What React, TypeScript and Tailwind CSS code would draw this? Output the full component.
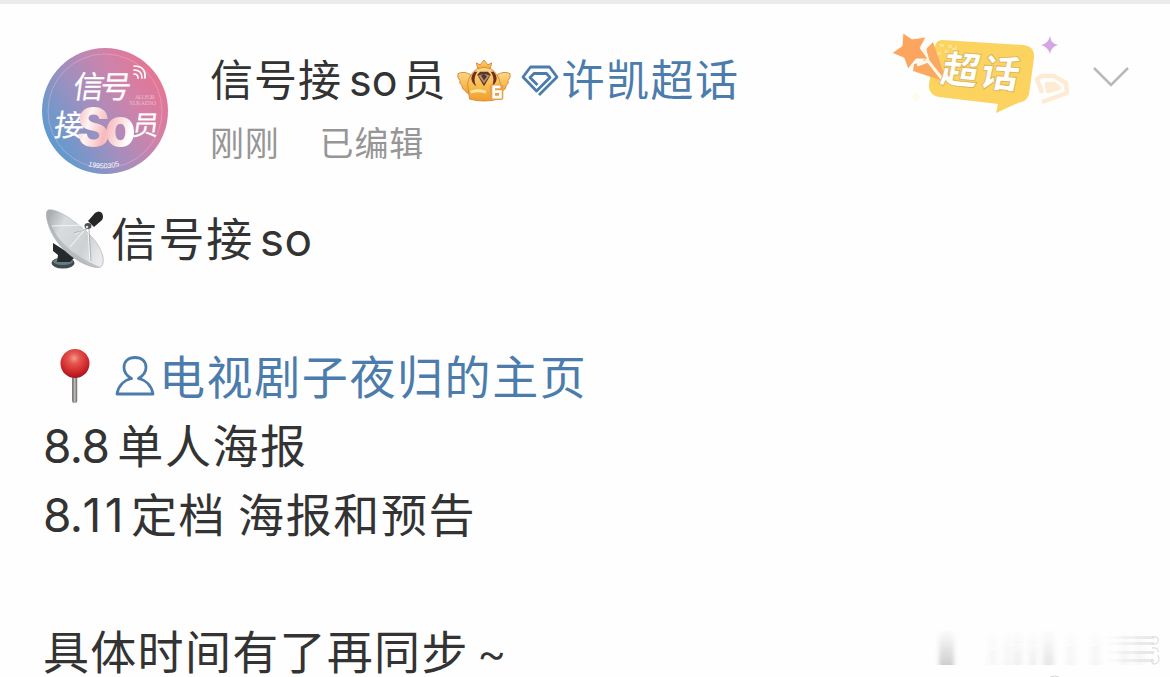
import type { ReactNode } from "react";

const Avatar = () => (
  <svg className="w-[126px] h-[126px] shrink-0" viewBox="0 0 126 126">
    <defs>
      <linearGradient id="disc" x1="0.05" y1="0.75" x2="0.9" y2="0.25">
        <stop offset="0" stopColor="#5b9bd0" />
        <stop offset="0.4" stopColor="#9f90bf" />
        <stop offset="0.75" stopColor="#d082a9" />
        <stop offset="1" stopColor="#e27796" />
      </linearGradient>
      <linearGradient id="so" x1="0" y1="0" x2="1" y2="0.3">
        <stop offset="0" stopColor="#f4a9ad" />
        <stop offset="0.3" stopColor="#fff5f3" />
        <stop offset="0.6" stopColor="#f7b9bb" />
        <stop offset="1" stopColor="#fff" />
      </linearGradient>
    </defs>
    <circle cx="63" cy="63" r="63" fill="url(#disc)" />
    <circle cx="63" cy="63" r="57" fill="none" stroke="#e9b7d0" strokeOpacity="0.6" strokeWidth="0.8" />
    <g fill="#fff" fontFamily="'Noto Sans CJK SC', sans-serif">
      <text x="0" y="0" fontSize="31" textLength="58" stroke="#fff" strokeWidth="0.2" transform="translate(30 50) skewX(-8)">信号</text>
      <text x="0" y="0" fontSize="30" stroke="#fff" strokeWidth="0.2" transform="translate(11 88) skewX(-8)">接</text>
      <text x="0" y="0" fontSize="27" stroke="#fff" strokeWidth="0.2" transform="translate(89 87) skewX(-8)">员</text>
    </g>
    <text x="35" y="98" fontSize="52" fontWeight="800" letterSpacing="-5" textLength="54" lengthAdjust="spacingAndGlyphs" fontFamily="Inter, sans-serif" fill="url(#so)">So</text>
    <g fill="none" stroke="#fff" strokeWidth="1.7" strokeLinecap="round">
      <path d="M92 26 q4 0 4 4" />
      <path d="M92 22 q8 0 8 8" />
      <path d="M92 18 q12 0 11 12" />
    </g>
    <g fill="#f5d3df" fillOpacity="0.7" fontFamily="'Liberation Serif', serif" fontSize="6">
      <text x="93" y="51" textLength="20">ALL FOR</text>
      <text x="87" y="57" textLength="27">XUKAI5SO</text>
    </g>
    <path id="yearArc" d="M46 118 Q63 123 80 117" fill="none" />
    <text fontSize="7" fill="#fff" fontFamily="'Liberation Sans', sans-serif">
      <textPath href="#yearArc" textLength="32">19950305</textPath>
    </text>
  </svg>
);

const Crown = () => (
  <svg className="w-[54px] h-[43px] shrink-0" viewBox="0 0 56 44" preserveAspectRatio="none">
    <defs>
      <linearGradient id="gold" x1="0" y1="0" x2="0" y2="1">
        <stop offset="0" stopColor="#fbd88a" />
        <stop offset="0.6" stopColor="#f7b94a" />
        <stop offset="1" stopColor="#ef9d2c" />
      </linearGradient>
    </defs>
    <g fill="url(#gold)" stroke="#d98a3d" strokeWidth="1" strokeLinejoin="round">
      <path d="M1 15 Q7 12 14 16 L16 37 Q10 36 8 32 Q5 31 5 27 Q2 25 3 22 Q0 19 1 15Z" />
      <path d="M55 15 Q49 12 42 16 L40 37 Q46 36 48 32 Q51 31 51 27 Q54 25 53 22 Q56 19 55 15Z" />
      <path d="M20 4 L24 6 L28 1 L32 6 L36 4 L34 11 L22 11Z" />
      <path d="M21 10 Q28 7 35 10 Q43 15 45 25 L43 41 Q28 45 13 41 L11 25 Q13 15 21 10Z" />
    </g>
    <path d="M18 13 Q11 21 20 28 Q16 20 21 13ZM38 13 Q45 21 36 28 Q40 20 35 13Z" fill="#70301f" />
    <path d="M21 16 L24 13 L32 13 L35 16 L28 28Z" fill="#59352b" />
    <path d="M22 17 L28 15 L34 17 L28 25Z" fill="#bd8d69" />
    <path d="M25 17 L28 15 L31 18 L28 22Z" fill="#493637" />
    <path d="M14 34 Q22 31 30 34" fill="none" stroke="#ffe5a3" strokeWidth="3" />
    <rect x="34" y="26" width="14" height="16" rx="2" fill="#e9a04c" />
    <path d="M45 28.5 H38 V39 H45 V33.5 H39" fill="none" stroke="#fff" strokeWidth="2.8" />
  </svg>
);

const TopicGem = () => (
  <svg className="w-[38px] h-[32px] shrink-0" viewBox="0 0 38 32" fill="none" stroke="#4b7cab" strokeWidth="2.8" strokeLinejoin="round">
    <path d="M18 30 L36 12 L28.5 2 H9.5 L2 12 L15.5 26 L29 12.5 L25.500 8.500 H13 L9 12.500 L16.500 20" />
  </svg>
);

const TopicBadge = () => (
  <svg className="w-[184px] h-[88px] shrink-0" viewBox="0 0 184 88">
    <path d="M52 9 L133 14 Q145 15 144 27 L139 63 Q137 70 131 71 L128 72 Q121 75 106 82 L108 73 L49 66 Q38 64 39 53 L45 16 Q46 9 52 9Z" fill="#fbd35e" />
    <path d="M47 23 L69 17 M50 14 L67 16" stroke="#fce58e" strokeWidth="3" strokeDasharray="4 4" />
    <path d="M37 17 L43 11 L54 43 L53 50 L23 40 L24 33 L33 31Z" fill="#fba960" />
    <path d="M34 16 L38 30 L53 49 M27 34 L38 30" fill="none" stroke="#fff8e9" strokeWidth="3" />
    <path d="M13 2 L22 8 L36 6 L30 17 L38 28 L26 28 L18 38 L14 27 L2 22 L12 15Z" fill="#fba55f" stroke="#fffdf8" strokeWidth="0.8" />
    <text x="0" y="0" fontSize="38" fontWeight="900" textLength="78" fontFamily="'Noto Sans CJK SC', sans-serif" fill="#fffef8" stroke="#d8b25f" strokeWidth="0.8" transform="translate(49 51) rotate(5) skewX(-7)">超话</text>
    <path d="M160 5 Q161 13 168 14 Q161 16 160 23 Q158 16 151 14 Q158 13 160 5Z" fill="#d6a5e6" />
    <g fill="none" stroke="#fdebd4" strokeWidth="4.5" strokeLinejoin="round" transform="translate(-3 -1)">
      <path d="M155 63 L150 49 L155 46 L167 46 L179 53 L180 63 L155 72" />
      <path d="M161 61 L160 54 L167 54 L172 58Z" fill="#fdebd4" />
    </g>
    <path d="M22 66 h8 M26 62 v8" stroke="#fffbe8" strokeWidth="3" />
  </svg>
);

const Dish = () => (
  <svg className="w-[60px] h-[60px] shrink-0" viewBox="0 0 60 60">
    <defs>
      <linearGradient id="dish" x1="0" y1="0.2" x2="1" y2="0.7">
        <stop offset="0" stopColor="#a9adaf" />
        <stop offset="0.25" stopColor="#d9dcde" />
        <stop offset="0.7" stopColor="#ced1d4" />
        <stop offset="1" stopColor="#e8eaec" />
      </linearGradient>
    </defs>
    <ellipse cx="18" cy="54" rx="11.500" ry="5.500" fill="#3d4a4e" />
    <ellipse cx="18" cy="52.500" rx="10" ry="3.500" fill="#697a80" />
    <path d="M8 34 L30 48 L25 53 H12 L13 46 L8 42Z" fill="#252a2d" />
    <path d="M3 1 C10 -1 25 8 42 23 C55 35 61 49 57 57 C54 61 39 57 24 45 C9 33 -3 5 3 1Z" fill="url(#dish)" stroke="#b5b9bb" strokeWidth="0.8" />
    <path d="M2 3 C5 22 20 44 55 58 C43 60 27 49 18 40 C6 29 -1 10 2 3Z" fill="#a9adb0" fillOpacity="0.65" />
    <path d="M7 17 L43 16 M42 18 L30 25 M43 19 L45 53 M42 18 L25 38" stroke="#f3f4f5" strokeWidth="1.100" fill="none" />
    <path d="M44 20 L46 52 M42 20 L29 24" stroke="#999ea1" strokeWidth="0.700" />
    <path d="M43 12 L50 4 Q54 1 57 4 Q59 8 57 11 L49 18Z" fill="#242628" />
    <ellipse cx="43" cy="17" rx="3.500" ry="3" fill="#4c5053" />
    <circle cx="42" cy="18" r="1.300" fill="#ddd" />
  </svg>
);

const Pin = () => (
  <svg className="w-[32px] h-[56px] shrink-0" viewBox="0 0 32 56">
    <defs>
      <radialGradient id="ball" cx="0.47" cy="0.32" r="0.65">
        <stop offset="0" stopColor="#f39a8f" />
        <stop offset="0.3" stopColor="#e4564e" />
        <stop offset="0.75" stopColor="#cf262b" />
        <stop offset="1" stopColor="#a91820" />
      </radialGradient>
      <linearGradient id="needle" x1="0" y1="0" x2="1" y2="0">
        <stop offset="0" stopColor="#55514d" />
        <stop offset="0.5" stopColor="#c4c1be" />
        <stop offset="1" stopColor="#65615e" />
      </linearGradient>
    </defs>
    <rect x="13.200" y="27" width="5" height="27" rx="2" fill="url(#needle)" />
    <circle cx="16" cy="14.500" r="14.500" fill="url(#ball)" />
  </svg>
);

const UserIcon = () => (
  <svg className="w-[40px] h-[42px] shrink-0" viewBox="0 0 40 42" fill="none" stroke="#4b7cab" strokeWidth="2.800" strokeLinejoin="round" strokeLinecap="round">
    <path d="M16.500 22.500 C10 19 9 14 9 11.500 C9 5 13.500 1.500 20 1.500 C26.500 1.500 31 5 31 11.500 C31 15.500 28.500 19.500 23.500 22.500 C31 24 36.500 30 38 38 H2 C3.500 30 9 24 16.500 22.500" />
  </svg>
);

// faint smeared strip in the bottom corner
const smears = [
  { x: 19, w: 15, o: 0.2 },
  { x: 68, w: 9, o: 0.03 },
  { x: 84, w: 7, o: 0.04 },
  { x: 93, w: 9, o: 0.06 },
  { x: 109, w: 8, o: 0.06 },
  { x: 123, w: 11, o: 0.1 },
  { x: 147, w: 8, o: 0.04 },
  { x: 171, w: 9, o: 0.04 },
  { x: 200, w: 9, o: 0.03 },
  { x: 215, w: 9, o: 0.03 },
];

const Smear = () => (
  <svg className="absolute left-[920px] top-[620px] w-[250px] h-[53px]" viewBox="0 0 250 53">
    <defs>
      <linearGradient id="fade" x1="0" y1="0" x2="0" y2="1">
        <stop offset="0" stopColor="#555" stopOpacity="0" />
        <stop offset="1" stopColor="#555" />
      </linearGradient>
      <linearGradient id="side" x1="0" y1="0" x2="1" y2="0">
        <stop offset="0" stopColor="#888" stopOpacity="0" />
        <stop offset="1" stopColor="#888" stopOpacity="0.2" />
      </linearGradient>
      <filter id="soft">
        <feGaussianBlur stdDeviation="2 0.3" />
      </filter>
    </defs>
    <g filter="url(#soft)">
      {smears.map((s) => (
        <rect key={s.x} x={s.x} y="6" width={s.w} height="35" fill="url(#fade)" opacity={s.o * 1.4} />
      ))}
    </g>
    {[12, 18, 27, 35].map((y) => (
      <rect key={y} x="185" y={y} width="49" height="3" fill="url(#side)" />
    ))}
    <path d="M232 13 Q240 12 238 18 Q236 21 232 20 M232 24 Q239 23 238 28 M238 31 Q241 38 235 40 Q231 40 232 36" fill="none" stroke="#e0e0e0" strokeWidth="1.300" />
    <path d="M130 53 Q135 51 139 53" fill="none" stroke="#d5d5d5" strokeWidth="1" />
  </svg>
);

const Line = ({ children }: { children?: ReactNode }) => (
  <p className="flex h-[68.8px] items-center whitespace-nowrap leading-[68px]">{children}</p>
);

const App = () => {
  return (
    <div className="relative h-[677px] w-[1170px] overflow-hidden border-t-4 border-[#ebebeb] bg-[#fefefe] font-[Inter,'Noto_Sans_CJK_SC',sans-serif] text-[#333]">
      <header className="flex h-[201px] items-start pl-[42px] pt-[44px]">
        <Avatar />
        <div className="ml-[42px] w-[680px]">
          <div className="flex h-[65px] items-center whitespace-nowrap text-[43px] leading-[65px] tracking-[1px]">
            <span>信号接</span>
            <span className="ml-[7px] tracking-[0px]">so</span>
            <span className="ml-[5px]">员</span>
            <span className="ml-[11px] flex">
              <Crown />
            </span>
            <span className="ml-[10px] flex">
              <TopicGem />
            </span>
            <span className="ml-[2px] tracking-[1.5px] text-[#4b7cab]">许凯超话</span>
          </div>
          <div className="flex h-[62px] items-center gap-[40px] text-[34px] leading-[62px] tracking-[0.8px] text-[#969696]">
            <span>刚刚</span>
            <span>已编辑</span>
          </div>
        </div>
        <div className="-mt-[17px] flex">
          <TopicBadge />
        </div>
        <svg className="ml-[18px] mt-[17px] h-[24px] w-[40px] shrink-0" viewBox="0 0 40 24" fill="none" stroke="#b9b9b9" strokeWidth="2.500">
          <path d="M2 3 L19 20 L36 3" />
        </svg>
      </header>

      <main className="pl-[43px] text-[46px] tracking-[1.6px]">
        <Line>
          <span className="ml-[2px] flex">
            <Dish />
          </span>
          <span className="ml-[6px]">信号接</span>
          <span className="ml-[6px] tracking-[0.5px]">so</span>
        </Line>
        <Line />
        <Line>
          <span className="ml-[16px] flex">
            <Pin />
          </span>
          <span className="ml-[24px] flex">
            <UserIcon />
          </span>
          <span className="ml-[4px] text-[#4b7cab]">电视剧子夜归的主页</span>
        </Line>
        <Line>
          <span className="tracking-[-0.6px]">8.8</span>
          <span className="ml-[8px]">单人海报</span>
        </Line>
        <Line>
          <span className="tracking-[-0.6px]">8.</span>
          <span className="tracking-[3.5px]">11</span>
          <span className="ml-[4px]">定档</span>
          <span className="ml-[12px]">海报和预告</span>
        </Line>
        <Line />
        <Line>
          <span className="tracking-[1.3px]">具体时间有了再同步</span>
          <span className="ml-[8px] font-light">~</span>
        </Line>
      </main>
      <Smear />
    </div>
  );
};

export default App;
